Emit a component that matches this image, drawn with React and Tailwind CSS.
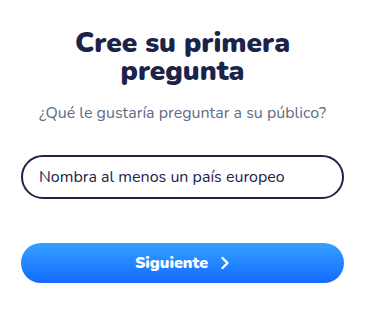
import React, { useState } from 'react';

const App = () => {
  const [question, setQuestion] = useState('Nombra al menos un país europeo');

  return (
    <div className="w-[365px] h-[316px] bg-white flex flex-col items-center pt-[29px] px-[21px] font-['Nunito','Lato',sans-serif]">
      <h1 className="text-[28px] leading-[28px] font-black text-[#1c2349] text-center w-[250px]">
        Cree su primera pregunta
      </h1>
      <p className="mt-[18px] text-[16px] leading-[20px] text-[#636a87] text-center">
        ¿Qué le gustaría preguntar a su público?
      </p>

      <div className="mt-[32px] w-full h-[44px] rounded-full border-2 border-[#1f2346] flex items-center pl-[16px] pr-4">
        <input
          value={question}
          onChange={(e) => setQuestion(e.target.value)}
          className="w-full bg-transparent outline-none text-[16px] text-[#1c2349]"
        />
      </div>

      <button className="mt-[44px] w-full h-[40px] rounded-full bg-gradient-to-b from-[#36a0ff] to-[#1769ff] flex items-center justify-center gap-[12px] text-white font-black text-[16px]">
        Siguiente
        <svg width="10" height="14" viewBox="0 0 10 14" fill="none">
          <path d="M2.5 2l5 5-5 5" stroke="white" strokeWidth="2.4" strokeLinecap="round" strokeLinejoin="round" />
        </svg>
      </button>
    </div>
  );
};

export default App;
